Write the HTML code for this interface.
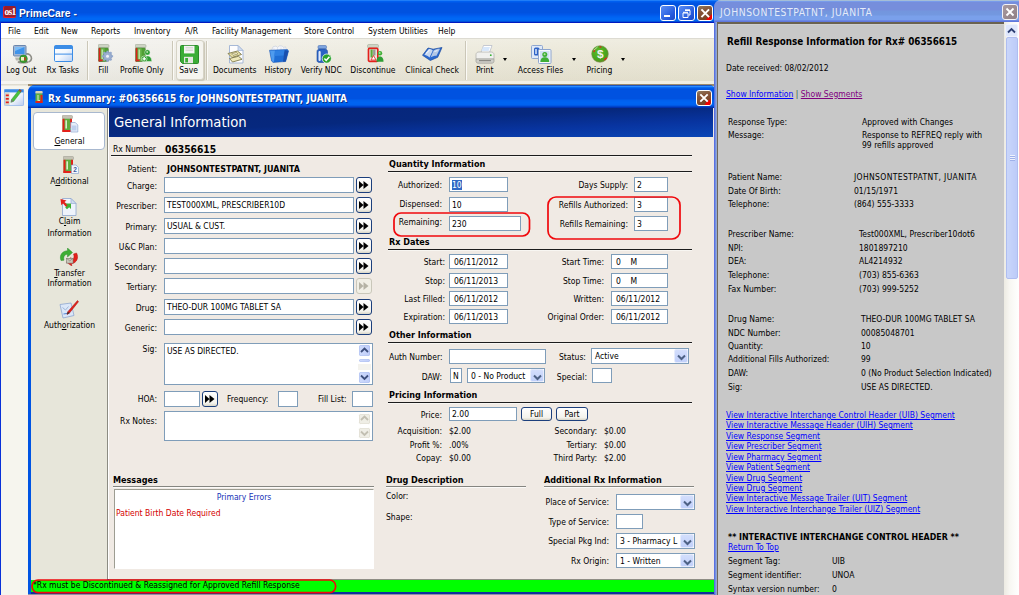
<!DOCTYPE html><html><head><meta charset="utf-8"><title>PrimeCare</title><style>
*{box-sizing:border-box;margin:0;padding:0}
html,body{width:1019px;height:595px;overflow:hidden;background:#f0eae4}
body{position:relative;font-family:"DejaVu Sans Condensed","Liberation Sans",sans-serif;font-size:8.5px;color:#000;line-height:11px}
.a{position:absolute;white-space:nowrap}
.t{position:absolute;white-space:nowrap;font-size:8.5px;line-height:11px;height:11px}
.r{text-align:right}
.b{font-weight:bold;font-size:9px}
.in{position:absolute;background:#fff;border:1px solid #7f9db9;font-size:8.5px;line-height:11px;padding:2px 0 0 2px;white-space:nowrap;overflow:hidden}
.hl{position:absolute;height:2px;border-top:1px solid #1c1c1c;border-bottom:1px solid #f8f6f2}
.gb{position:absolute;width:16px;height:16px;border:1px solid #1c3f7c;border-radius:3px;background:linear-gradient(#fff,#f3f2ec 80%,#d9d6c8)}
.gb svg{position:absolute;left:2px;top:3px}
.cb{position:absolute;background:#fff;border:1px solid #7f9db9;font-size:8.5px;line-height:11px;padding:2px 0 0 3px;white-space:nowrap;overflow:hidden}
.cb i{position:absolute;right:0;top:0;bottom:0;width:14px;background:linear-gradient(#d3defc,#c1d0fa);border:1px solid #e6ecfd;border-radius:2px}
.cb i svg{position:absolute;left:1.5px;top:3.5px}
.lk{color:#0000ff;text-decoration:underline}
.tb{position:absolute;top:38px;height:44px;text-align:center;font-size:11px}
.tb span{position:absolute;left:-20px;right:-20px;top:26px;text-align:center;white-space:nowrap}
.ico{position:absolute}
</style></head><body>
<div class="a" style="left:0px;top:0px;width:722px;height:23px;background:linear-gradient(#1f7df8 0.5px,#005ff0 1.5px,#0058e8 2.5px,#0052e0 3.5px,#0052e0 12.5px,#0057e9 14.5px,#0061f1 16.5px,#0068f5 18.5px,#0068f5 19.5px,#0064ee 20.5px,#0050d8 21.5px,#0018c0 22.5px)"></div>
<div class="a" style="left:3px;top:6px;width:13px;height:12px;background:#9a1d2c;border-left:1px solid #e8202a;border-bottom:1px solid #e8202a;border-radius:2px;color:#fff;font-size:9.5px;line-height:13px;font-weight:bold;text-align:center;letter-spacing:-0.8px;overflow:hidden;font-family:'Liberation Serif',serif">os1</div>
<div class="a" style="left:19px;top:6.5px;font-family:'Liberation Sans',sans-serif;font-size:10.300px;line-height:14px;font-weight:bold;color:#fff;text-shadow:1px 1px 0 #0a2f8a">PrimeCare -</div>
<div class="a" style="left:659.5px;top:4.5px;width:16.5px;height:16.5px;border:1px solid #fff;border-radius:3px;background:linear-gradient(135deg,#5c8cf2 0%,#3f75ea 35%,#2559dc 70%,#1c48c4 100%);overflow:hidden">
<div style="position:absolute;left:3.500px;top:9px;width:5.500px;height:2.500px;background:#fff"></div>
</div>
<div class="a" style="left:678px;top:4.5px;width:16.5px;height:16.5px;border:1px solid #fff;border-radius:3px;background:linear-gradient(135deg,#5c8cf2 0%,#3f75ea 35%,#2559dc 70%,#1c48c4 100%);overflow:hidden">
<svg width="15" height="15" viewBox="0 0 15 15" style="position:absolute;left:0;top:0"><path d="M6 4.500h5v4.500h-1.500M6 3.800h5" stroke="#fff" fill="none" stroke-width="1"/><path d="M4 7h5v4.500h-5zM4 6.300h5" stroke="#fff" fill="none" stroke-width="1"/></svg>
</div>
<div class="a" style="left:696.5px;top:4.5px;width:16.5px;height:16.5px;border:1px solid #fff;border-radius:3px;background:linear-gradient(160deg,#8f7c60 0%,#86553a 35%,#7b4527 75%,#8a3a20 100%);overflow:hidden">
<svg width="14.5" height="14.5" viewBox="0 0 14 14" style="position:absolute;left:0;top:0"><path d="M9.500 11l4-3v6h-6z" fill="#f20000"/><path d="M3.300 3.300L10.700 10.700M10.700 3.300L3.300 10.700" stroke="#fff" stroke-width="1.900" stroke-linecap="butt"/></svg>
</div>
<div class="a" style="left:0px;top:23px;width:716px;height:15px;background:#fff"></div>
<div class="t " style="left:8px;top:26px;">File</div>
<div class="t " style="left:34px;top:26px;">Edit</div>
<div class="t " style="left:61px;top:26px;">New</div>
<div class="t " style="left:91px;top:26px;">Reports</div>
<div class="t " style="left:134px;top:26px;">Inventory</div>
<div class="t " style="left:185px;top:26px;">A/R</div>
<div class="t " style="left:212px;top:26px;">Facility Management</div>
<div class="t " style="left:304px;top:26px;">Store Control</div>
<div class="t " style="left:368px;top:26px;">System Utilities</div>
<div class="t " style="left:438px;top:26px;">Help</div>
<div class="a" style="left:0px;top:38px;width:716px;height:43px;background:linear-gradient(rgba(255,255,255,.25),rgba(255,255,255,0) 40%,rgba(140,130,90,.09)),linear-gradient(90deg,#f3f3f0 0%,#f0efea 20%,#eeece2 40%,#ebe8d9 75%,#eae7d7 100%)"></div>
<div class="a" style="left:0px;top:38px;width:716px;height:1px;background:#dddbd2"></div>
<div class="a" style="left:0px;top:81px;width:716px;height:3px;background:linear-gradient(90deg,#f6f5f1,#efede1)"></div>
<div class="a" style="left:0px;top:84px;width:28px;height:2px;background:linear-gradient(#d8d5c8,#f0eee6)"></div>
<div class="a" style="left:28px;top:84px;width:688px;height:2px;background:#9c8a6a"></div>
<div class="a" style="left:176px;top:40px;width:28px;height:40px;border:1px solid #d6d3c6;border-radius:3px;background:#f5f4ef;box-shadow:1px 1px 1px #c9c5b4"></div>
<div class="a" style="left:13px;top:45px;line-height:0"><svg width="20" height="19" viewBox="0 0 20 19"><path d="M13 9a4.5 4.5 0 0 1 5.5 4.5a4 4 0 0 1-3 3.5" fill="none" stroke="#8d8d86" stroke-width="1.6"/><rect x=".5" y=".5" width="12.5" height="10.5" rx="1" fill="#9fb6d6" stroke="#6a86ad"/><rect x="2" y="2" width="9.5" height="7" fill="#3f93ea"/><path d="M2 2h9.5L2 6z" fill="#7cbcf6"/><path d="M2 12.5h8l1 3H3z" fill="#b7b7b0"/><ellipse cx="10" cy="17" rx="5.5" ry="1.6" fill="#8d8d86"/><circle cx="10.500" cy="13.800" r="3.900" fill="#35a02c" stroke="#2a7d24" stroke-width=".5"/><rect x="8" y="12" width="3" height="3.600" fill="#f3edc4"/><rect x="11.400" y="12.300" width="1.300" height="3.200" fill="#e3201b"/></svg></div>
<div class="t" style="left:-28.8px;width:100px;text-align:center;top:64.5px">Log Out</div>
<div class="a" style="left:54px;top:45px;line-height:0"><svg width="19" height="17" viewBox="0 0 19 17"><defs><linearGradient id="tg" x1="0" y1="0" x2="1" y2="1"><stop offset="0" stop-color="#fff"/><stop offset=".5" stop-color="#f4f8fe"/><stop offset="1" stop-color="#b9d0f3"/></linearGradient></defs><rect x=".5" y=".5" width="18" height="16" rx="1.2" fill="url(#tg)" stroke="#3c8de6"/><rect x=".5" y=".5" width="18" height="3.5" rx="1" fill="#3c8de6"/><rect x="1" y="8.6" width="17" height="1" fill="#3c8de6"/></svg></div>
<div class="t" style="left:12.799999999999997px;width:100px;text-align:center;top:64.5px">Rx Tasks</div>
<div class="a" style="left:98px;top:44px;line-height:0"><svg width="16" height="19" viewBox="0 0 16 19"><g transform="translate(0,0.5)"><rect x="0" y="0" width="11" height="3.4" rx="1.2" fill="#cdd4c4" stroke="#98a08e" stroke-width=".5"/><rect x=".6" y="3.4" width="9.8" height="13.6" rx="1" fill="#4f9f34"/><rect x="2.6" y="3.4" width="4" height="13.6" fill="#6bb64c"/><rect x=".6" y="3.4" width="1.8" height="13.6" fill="#e3201b"/><rect x=".6" y="15" width="4" height="2" fill="#e3201b"/><rect x="3.5" y="5" width="1.5" height="9.5" fill="#b9e0a2"/><rect x=".6" y="3.4" width="9.8" height="13.6" rx="1" fill="none" stroke="#4d7a38" stroke-width=".5"/></g><g transform="translate(9.5,12.3)"><circle r="4.2" fill="#93a8cc" stroke="#6f86b0" stroke-width=".6"/><circle r="1.6" fill="#e9edf5"/><g stroke="#93a8cc" stroke-width="2"><path d="M0-5.6V5.6M-5.6 0H5.6M-4-4L4 4M-4 4L4-4"/></g><circle r="3.2" fill="#9db0d2"/><circle r="1.5" fill="#eef1f7"/></g></svg></div>
<div class="t" style="left:53.400000000000006px;width:100px;text-align:center;top:64.5px">Fill</div>
<div class="a" style="left:135px;top:44px;line-height:0"><svg width="18" height="19" viewBox="0 0 18 19"><g transform="translate(0,0.5)"><rect x="0" y="0" width="11" height="3.4" rx="1.2" fill="#cdd4c4" stroke="#98a08e" stroke-width=".5"/><rect x=".6" y="3.4" width="9.8" height="13.6" rx="1" fill="#4f9f34"/><rect x="2.6" y="3.4" width="4" height="13.6" fill="#6bb64c"/><rect x=".6" y="3.4" width="1.8" height="13.6" fill="#e3201b"/><rect x=".6" y="15" width="4" height="2" fill="#e3201b"/><rect x="3.5" y="5" width="1.5" height="9.5" fill="#b9e0a2"/><rect x=".6" y="3.4" width="9.8" height="13.6" rx="1" fill="none" stroke="#4d7a38" stroke-width=".5"/></g><g transform="translate(8,6)"><circle cx="4.4" cy="2.4" r="2.7" fill="#2f9e35" stroke="#e9f3e4" stroke-width=".5"/><path d="M0 11.5c0-4 2-5.600 4.4-5.600s4.400 1.600 4.400 5.600z" fill="#2f9e35" stroke="#e9f3e4" stroke-width=".5"/><circle cx="4.2" cy="2" r="1" fill="#b5e3a6"/><circle cx="1.2" cy="8.8" r="2.9" fill="#2f9e2a" stroke="#fff" stroke-width=".5"/><path d="M-.6 8.8h3.6M1.2 7v3.6" stroke="#fff" stroke-width="1.3"/></g></svg></div>
<div class="t" style="left:91.9px;width:100px;text-align:center;top:64.5px">Profile Only</div>
<div class="a" style="left:179.5px;top:44.5px;line-height:0"><svg width="19" height="19" viewBox="0 0 19 19"><path d="M1.5.5h16a1 1 0 0 1 1 1v16a1 1 0 0 1-1 1h-15l-2-2v-15a1 1 0 0 1 1-1z" fill="#3bad36" stroke="#2b8c2a"/><rect x="4" y=".8" width="10.5" height="7.6" fill="#f4f4f2"/><rect x="5.5" y="2.2" width="7.5" height="1.2" fill="#d4d4d0"/><rect x="5.5" y="4.6" width="7.5" height="1.2" fill="#d4d4d0"/><rect x="4" y="11.8" width="9" height="6.4" fill="#e6e6e2"/><rect x="5.2" y="13" width="2.8" height="4.4" fill="#3bad36"/></svg></div>
<div class="t" style="left:138.6px;width:100px;text-align:center;top:64.5px">Save</div>
<div class="a" style="left:227px;top:44.5px;line-height:0"><svg width="18" height="19" viewBox="0 0 18 19"><path d="M2.500.500h8.500l5 5v12.500h-13.500z" fill="#fdfdfe" stroke="#9db1d4" stroke-width=".9"/><path d="M11 .500v5h5z" fill="#cfdcf0" stroke="#9db1d4" stroke-width=".7"/><path d="M1 8.500l9.500-2.500l4 3.500l-9.500 3z" fill="#e9e2a8" stroke="#7f7a4c" stroke-width=".9"/><path d="M4.500 8.800l5-1.300l1.500 1.400l-5 1.500z" fill="#f5f0cc" stroke="#7f7a4c" stroke-width=".6"/><path d="M2.500 13.500l9-2.200l3.500 3l-9.500 2.700z" fill="#efe9ba" stroke="#7f7a4c" stroke-width=".9"/></svg></div>
<div class="t" style="left:184.7px;width:100px;text-align:center;top:64.5px">Documents</div>
<div class="a" style="left:269px;top:45px;line-height:0"><svg width="20" height="18" viewBox="0 0 20 18"><path d="M2.500 5.500l1.500-3.700l3-.8l1.700 1.500l1.600-1.700l3 .2l1.200 1.500l2-.7l1.200 3.700z" fill="#f4f6fa" stroke="#c2cad8" stroke-width=".6"/><path d="M5 3.200v2M8.500 2.800v2.500M12 2.500v3M15 3v2.500" stroke="#d5dbe6" stroke-width=".7"/><path d="M.500 5.200l18-.7l1 1.500l-2.800 10.500l-12.500 1l-1.700-1.500z" fill="#1f6dd4" stroke="#1a56b4" stroke-width=".5"/><path d="M1 5.700l5-.2l-1 11.500l-2-.8z" fill="#4f9bee"/><path d="M15.500 5l4 1l-2.800 10.500l-2.700.3z" fill="#1950ae"/><path d="M6 5.500l9.500-.4l-1 5.500l-9 .5z" fill="#2f80e2"/></svg></div>
<div class="t" style="left:228.10000000000002px;width:100px;text-align:center;top:64.5px">History</div>
<div class="a" style="left:316px;top:44.5px;line-height:0"><svg width="16" height="19" viewBox="0 0 16 19"><rect x="2" y=".5" width="8.500" height="3.500" rx="1.200" fill="#7ea4de" stroke="#4c72b4" stroke-width=".6"/><path d="M1 6.500c0-1.500 1.200-2.500 2.800-2.500h4.900c1.600 0 2.800 1 2.800 2.500v9c0 1.200-1 2-2.200 2h-6.100c-1.200 0-2.200-.8-2.200-2z" fill="#2b63c4" stroke="#1f4a9a" stroke-width=".6"/><rect x="2.500" y="6" width="2.200" height="10" rx="1" fill="#dfe9fa"/><circle cx="10.800" cy="13.600" r="4.600" fill="#2aa22c" stroke="#fff" stroke-width=".7"/><path d="M8.400 13.600l1.800 1.900l3.200-3.700" fill="none" stroke="#fff" stroke-width="1.500"/></svg></div>
<div class="t" style="left:271.3px;width:100px;text-align:center;top:64.5px">Verify NDC</div>
<div class="a" style="left:367px;top:44px;line-height:0"><svg width="18" height="19" viewBox="0 0 18 19"><g transform="translate(.5,.5)"><rect x="0" y="0" width="11" height="3.4" rx="1.2" fill="#cdd4c4" stroke="#98a08e" stroke-width=".5"/><rect x="1" y="3.800" width="9.300" height="13" rx="1" fill="#e9ece6" stroke="#e3201b" stroke-width="1.700"/><rect x="3" y="5" width="2.200" height="8" fill="#5aaa3c"/><rect x="5.600" y="5" width="2.400" height="6" fill="#9a9a92"/><path d="M3.500 15.500l2.500-4.500l2.500 4.500z" fill="#fff" stroke="#e3201b" stroke-width=".8"/></g><g transform="translate(9.500,7)"><circle cx="3.500" cy="2.300" r="2.200" fill="#3fae35"/><path d="M0 10.800c0-3.800 1.500-5.200 3.500-5.200s3.500 1.400 3.500 5.200z" fill="#2e9e34"/><circle cx="3.200" cy="1.900" r=".9" fill="#b5e3a6"/></g></svg></div>
<div class="t" style="left:322.9px;width:100px;text-align:center;top:64.5px">Discontinue</div>
<div class="a" style="left:422px;top:46.5px;line-height:0"><svg width="21" height="14" viewBox="0 0 21 14"><path d="M.5 8.300l5.500-7.300l5.200 1.200l8.800-1.700l-4.300 9.800l-7.400 3.200z" fill="#2a68cf" stroke="#1b4b9c" stroke-width=".7"/><path d="M2.300 7.800l4.500-5.800c1.600 0 2.900.4 4 1.500l-3.300 7c-1.400-1.300-3-2.200-5.200-2.700z" fill="#c9d8ef"/><path d="M11.600 3.400c1.600-1 3.800-1.600 6.400-1.600l-3.500 7c-2.400 0-4.400.6-6 1.800z" fill="#b4c8e6"/><path d="M4 6.500l3.500-3.500M12.500 4.500l3-1" stroke="#e8f0fb" stroke-width="1.200"/></svg></div>
<div class="t" style="left:382.1px;width:100px;text-align:center;top:64.5px">Clinical Check</div>
<div class="a" style="left:475px;top:44.5px;line-height:0"><svg width="20" height="19" viewBox="0 0 20 19"><path d="M6 7.500l2.500-7h8.500l-2.500 7z" fill="#fff" stroke="#b0b6c4" stroke-width=".7"/><path d="M8 2h7l-1.400 4h-7z" fill="#d7e7fb"/><path d="M1 9.500c0-1.400 1.200-2.500 2.800-2.500h12.400c1.600 0 2.800 1.100 2.800 2.500v4.500h-18z" fill="#f0f0ee" stroke="#aeaea8" stroke-width=".7"/><path d="M1 14h18v2.200c0 1.200-1 2-2.200 2h-13.600c-1.200 0-2.200-.8-2.200-2z" fill="#cfcfca" stroke="#9c9c96" stroke-width=".7"/><rect x="4" y="15" width="12" height="1.200" fill="#8a8a86"/><circle cx="15.800" cy="10.200" r=".9" fill="#35b02f"/></svg></div>
<div class="t" style="left:434.7px;width:100px;text-align:center;top:64.5px">Print</div>
<div class="a" style="left:530.5px;top:44.5px;line-height:0"><svg width="21" height="19" viewBox="0 0 21 19"><rect x=".5" y=".5" width="11" height="13" rx="1" fill="#dfe9f8" stroke="#8ea6cf"/><rect x="3" y="2.500" width="5.500" height="8" rx="1.500" fill="#2e62c6"/><rect x="4.200" y="4" width="1.600" height="5" fill="#cfe0f8"/><rect x="7.500" y="4.500" width="12.500" height="14" rx="1" fill="#f6f8fc" stroke="#8ea6cf"/><rect x="9" y="6" width="9.500" height="11" fill="#d3e1f5"/><circle cx="13.800" cy="9.600" r="2.500" fill="#3fae35"/><path d="M9.400 17c0-3.400 2-4.800 4.400-4.800s4.400 1.400 4.400 4.800z" fill="#3fae35"/><circle cx="13.600" cy="9.200" r="1" fill="#b5e3a6"/></svg></div>
<div class="t" style="left:490.5px;width:100px;text-align:center;top:64.5px">Access Files</div>
<div class="a" style="left:591.3px;top:45.3px;line-height:0"><svg width="18" height="18" viewBox="0 0 19 19"><defs><radialGradient id="pg" cx=".4" cy=".35" r=".75"><stop offset="0" stop-color="#5cbc2a"/><stop offset=".65" stop-color="#48a41c"/><stop offset="1" stop-color="#6f8420"/></radialGradient></defs><circle cx="9.500" cy="9.500" r="8.800" fill="url(#pg)" stroke="#7d8f58" stroke-width=".6"/><path d="M3 7.500l1-3M9 2l2 .3M14 16l2.500-2.500" stroke="#e3201b" stroke-width="1.300"/><path d="M3 5.500l4-3.500" stroke="#d8f0c8" stroke-width=".8"/><text x="9.700" y="13.800" text-anchor="middle" font-family="Liberation Sans,sans-serif" font-weight="bold" font-size="12.500" fill="#f1f1ee">$</text></svg></div>
<div class="t" style="left:549.4px;width:100px;text-align:center;top:64.5px">Pricing</div>
<div class="a" style="left:87px;top:41px;width:2px;height:39px;border-left:1px solid #cbc7b8;border-right:1px solid #fbfaf6"></div>
<div class="a" style="left:171.5px;top:41px;width:2px;height:39px;border-left:1px solid #cbc7b8;border-right:1px solid #fbfaf6"></div>
<div class="a" style="left:205.5px;top:41px;width:2px;height:39px;border-left:1px solid #cbc7b8;border-right:1px solid #fbfaf6"></div>
<div class="a" style="left:464.5px;top:41px;width:2px;height:39px;border-left:1px solid #cbc7b8;border-right:1px solid #fbfaf6"></div>
<div class="a" style="left:502.5px;top:58px;width:0;height:0;border-left:2.5px solid transparent;border-right:2.5px solid transparent;border-top:3px solid #000"></div>
<div class="a" style="left:572.0px;top:58px;width:0;height:0;border-left:2.5px solid transparent;border-right:2.5px solid transparent;border-top:3px solid #000"></div>
<div class="a" style="left:621.0px;top:58px;width:0;height:0;border-left:2.5px solid transparent;border-right:2.5px solid transparent;border-top:3px solid #000"></div>
<div class="a" style="left:0px;top:86px;width:28px;height:509px;background:#f6f5ee"></div>
<div class="a" style="left:0px;top:22px;width:1px;height:573px;background:#0831d9"></div>
<div class="a" style="left:28px;top:85px;width:688px;height:510px;background:#0054e3;border-radius:7px 7px 0 0"></div>
<div class="a" style="left:28px;top:85px;width:688px;height:23px;border-radius:7px 7px 0 0;background:linear-gradient(#1c55c0 0.5px,#2a8cff 1.5px,#0a6af2 2.5px,#005ae8 3.5px,#0052e0 4.5px,#0052e0 13.5px,#0060ee 15.5px,#0064f2 17.5px,#0062f0 19.5px,#0058e4 20.5px,#0046cc 21.5px,#0032b0 22.5px)"></div>
<div class="a" style="left:48px;top:92px;font-size:10px;line-height:14px;font-weight:bold;color:#fff;text-shadow:1px 1px 0 #0a2f8a">Rx Summary: #06356615 for JOHNSONTESTPATNT, JUANITA</div>
<div class="a" style="left:695.5px;top:89.5px;width:16px;height:16px;border:1px solid #fff;border-radius:3px;background:linear-gradient(160deg,#8f7c60 0%,#86553a 35%,#7b4527 75%,#8a3a20 100%);overflow:hidden">
<svg width="14" height="14" viewBox="0 0 14 14" style="position:absolute;left:0;top:0"><path d="M9.500 11l4-3v6h-6z" fill="#f20000"/><path d="M3.300 3.300L10.700 10.700M10.700 3.300L3.300 10.700" stroke="#fff" stroke-width="1.900" stroke-linecap="butt"/></svg>
</div>
<div class="a" style="left:35px;top:91px;line-height:0"><svg width="8" height="12" viewBox="0 0 8 12"><rect x=".3" y="0" width="7.400" height="2.800" rx="1" fill="#d8d2b4"/><rect x=".5" y="2.600" width="7" height="9.400" rx=".8" fill="#5fae3e"/><rect x=".5" y="10" width="7" height="2" fill="#e3201b"/><rect x="5.500" y="4" width="2" height="8" fill="#e3201b"/><path d="M3 4v5.500h2" fill="none" stroke="#cfe8c0" stroke-width="1.100"/></svg></div>
<div class="a" style="left:4px;top:88.500px;line-height:0"><svg width="20" height="17" viewBox="0 0 20 17"><defs><linearGradient id="sg" x1="0" y1="0" x2="1" y2="1"><stop offset="0" stop-color="#fff"/><stop offset=".6" stop-color="#eef2fb"/><stop offset="1" stop-color="#b9cbef"/></linearGradient></defs><rect x=".4" y=".4" width="19.200" height="16.200" rx="1" fill="url(#sg)" stroke="#8fb2ea" stroke-width=".8"/><rect x=".4" y=".4" width="19.200" height="3" fill="#3c8de6"/><rect x="1" y="3.600" width="4.500" height="12.500" fill="#d9d6c4"/><rect x="1.800" y="5.500" width="3" height="1.700" fill="#e3201b"/><rect x="1.800" y="9" width="3" height="1.700" fill="#e3201b"/><rect x="1.800" y="12.500" width="3" height="1.700" fill="#e3201b"/><path d="M7.500 10.500l7-9l2.200 1.800l-7 9l-2.800 1z" fill="#49c23c" stroke="#2b8c2a" stroke-width=".5"/><path d="M14.500 1.500l1.200-1.500l2.200 1.800l-1.200 1.500z" fill="#a0522d"/><path d="M7.500 10.500l2.200 1.800l-2.800 1z" fill="#777"/></svg></div>
<div class="a" style="left:31px;top:108px;width:76px;height:485px;background:#e7e6da"></div>
<div class="a" style="left:107px;top:108px;width:1px;height:471px;background:#8c8c82"></div>
<div class="a" style="left:108px;top:108px;width:1px;height:471px;background:#fff"></div>
<div class="a" style="left:109px;top:108px;width:605px;height:485px;background:#f0eae4"></div>
<div class="a" style="left:109px;top:108px;width:604px;height:28.5px;background:linear-gradient(to bottom right,#06267a 0%,#06287e 45%,#0834a0 72%,#0a46b6 100%)"></div>
<div class="a" style="left:114px;top:113px;font-size:14.7px;line-height:18px;color:#fff">General Information</div>
<div class="a" style="left:33px;top:112px;width:72px;height:38px;background:#fff;border:1px solid #a8b8cf;border-radius:4px"></div>
<div class="a" style="left:62px;top:115px;line-height:0"><svg width="17" height="18" viewBox="0 0 17 18"><g transform="translate(0,0.5)"><rect x="0" y="0" width="10.5" height="3.3000000000000003" rx="1" fill="#c4c2b4" stroke="#96948a" stroke-width=".5"/><rect x=".5" y="3.3000000000000003" width="9.5" height="13.2" rx="1" fill="#5fae3e"/><rect x=".5" y="3.3000000000000003" width="2" height="13.2" fill="#e3201b"/><rect x=".5" y="14.5" width="9.5" height="2" fill="#e3201b"/><rect x="3.4" y="4.800000000000001" width="1.6" height="8.2" fill="#d9efcc"/><rect x="8.1" y="3.3000000000000003" width="1.9" height="9.2" fill="#e3201b"/></g><path d="M8.800 7.500h4.500l2.500 2.500v7h-7z" fill="#e8effa" stroke="#8ea6cf" stroke-width=".7"/><rect x="10" y="10.500" width="4.500" height="5" fill="#bdd0ee"/></svg></div>
<div class="a" style="left:63px;top:156px;line-height:0"><svg width="17" height="18" viewBox="0 0 17 18"><g transform="translate(0,0.5)"><rect x="0" y="0" width="10.5" height="3.3000000000000003" rx="1" fill="#c4c2b4" stroke="#96948a" stroke-width=".5"/><rect x=".5" y="3.3000000000000003" width="9.5" height="13.2" rx="1" fill="#5fae3e"/><rect x=".5" y="3.3000000000000003" width="2" height="13.2" fill="#e3201b"/><rect x=".5" y="14.5" width="9.5" height="2" fill="#e3201b"/><rect x="3.4" y="4.800000000000001" width="1.6" height="8.2" fill="#d9efcc"/><rect x="8.1" y="3.3000000000000003" width="1.9" height="9.2" fill="#e3201b"/></g><path d="M8.500 9h4.500l2.500 2.500v6h-7z" fill="#f4f7fc" stroke="#8ea6cf" stroke-width=".7"/><text x="12" y="16.200" font-size="6.500" font-weight="bold" font-family="Liberation Sans,sans-serif" text-anchor="middle" fill="#3a5a9a">2</text></svg></div>
<div class="a" style="left:60px;top:196.5px;line-height:0"><svg width="17" height="19" viewBox="0 0 17 19"><path d="M2.500 1.500h8.500l5 5v12h-13.500z" fill="#eef3fb" stroke="#8ea6cf" stroke-width=".8"/><path d="M11 1.500v5h5z" fill="#cfdcf0" stroke="#8ea6cf" stroke-width=".6"/><path d="M.5 2l6 1.500l-2 1.500l4 3.500l-2 2l-3.500-4l-1.700 1.700z" fill="#e3201b"/><path d="M5.500 6.500l5.500 0l0 5.500l-1.800-1.800l-2.200 2l-1.800-1.800l2.200-2z" fill="#3fae35"/></svg></div>
<div class="a" style="left:59px;top:248px;line-height:0"><svg width="20" height="18" viewBox="0 0 20 18"><path d="M2 12.500c-2-5 1-9.500 6.500-9.800l0-2.700l5 4.500l-5 4.500l0-2.800c-3 .2-4.500 2.500-3.500 6z" fill="#3fae35" stroke="#2b8c2a" stroke-width=".5"/><path d="M17.500 5c2.500 4.500.5 9.800-5 10.800l.3 2.200l-5.300-3.800l4.300-4.700l.3 2.700c2.700-.8 3.600-3.200 2.400-6.200z" fill="#e3201b" stroke="#b01712" stroke-width=".5"/><rect x="7.500" y="10.300" width="6.500" height="4.800" fill="#c9c7ba" stroke="#7d7b70" stroke-width=".6"/><path d="M7.500 10.300l3.250 2.600l3.250-2.600" fill="none" stroke="#7d7b70" stroke-width=".6"/></svg></div>
<div class="a" style="left:59px;top:299.5px;line-height:0"><svg width="20" height="19" viewBox="0 0 20 19"><path d="M1 4.500l11-1.500l3 12.500l-11 2.500z" fill="#dbe7f8" stroke="#8ea6cf" stroke-width=".8"/><path d="M3.500 7.500l3 2.500l3-3.500" fill="none" stroke="#9fb6d8" stroke-width="1"/><path d="M4.500 14l6-1" stroke="#5a8bd6" stroke-width="1.200"/><path d="M18.500.5l1 1.200l-9 11.300l-2.500 1.500l.8-2.800z" fill="#e3201b" stroke="#a01510" stroke-width=".5"/><path d="M8 14.500l.800-2.800l1.700 1.300z" fill="#333"/></svg></div>
<div class="t" style="left:31px;width:77px;text-align:center;top:136px"><u>G</u>eneral</div>
<div class="t" style="left:31px;width:77px;text-align:center;top:176px">A<u>d</u>ditional</div>
<div class="t" style="left:31px;width:77px;text-align:center;top:216px">C<u>l</u>aim</div>
<div class="t" style="left:31px;width:77px;text-align:center;top:228px">Information</div>
<div class="t" style="left:31px;width:77px;text-align:center;top:268px"><u>T</u>ransfer</div>
<div class="t" style="left:31px;width:77px;text-align:center;top:278px">Information</div>
<div class="t" style="left:31px;width:77px;text-align:center;top:320px">Auth<u>o</u>rization</div>
<div class="t " style="left:113px;top:144px;">Rx Number</div>
<div class="t b" style="left:165px;top:144px;font-size:10.2px">06356615</div>
<div class="hl" style="left:111px;top:155px;width:580.5px"></div>
<div class="t b" style="left:167px;top:164px;font-size:8.9px">JOHNSONTESTPATNT, JUANITA</div>
<div class="t r " style="left:-143px;width:300px;top:164px;">Patient:</div>
<div class="t r " style="left:-143px;width:300px;top:181px;">Charge:</div>
<div class="in" style="left:164px;top:177px;width:190px;height:16px;padding-top:1.5px"></div>
<div class="gb" style="left:356px;top:177px"><svg width="10" height="8" viewBox="0 0 10 8"><path d="M0 0L4.5 4L0 8Z M4.5 0L9.5 4L4.5 8Z" fill="#000"/></svg></div>
<div class="t r " style="left:-143px;width:300px;top:201px;">Prescriber:</div>
<div class="in" style="left:164px;top:197px;width:190px;height:16px;padding-top:1.5px">TEST000XML, PRESCRIBER10D</div>
<div class="gb" style="left:356px;top:197px"><svg width="10" height="8" viewBox="0 0 10 8"><path d="M0 0L4.5 4L0 8Z M4.5 0L9.5 4L4.5 8Z" fill="#000"/></svg></div>
<div class="t r " style="left:-143px;width:300px;top:222px;">Primary:</div>
<div class="in" style="left:164px;top:218px;width:190px;height:16px;padding-top:1.5px">USUAL &amp; CUST.</div>
<div class="gb" style="left:356px;top:218px"><svg width="10" height="8" viewBox="0 0 10 8"><path d="M0 0L4.5 4L0 8Z M4.5 0L9.5 4L4.5 8Z" fill="#000"/></svg></div>
<div class="t r " style="left:-143px;width:300px;top:242px;">U&amp;C Plan:</div>
<div class="in" style="left:164px;top:238px;width:190px;height:16px;padding-top:1.5px"></div>
<div class="gb" style="left:356px;top:238px"><svg width="10" height="8" viewBox="0 0 10 8"><path d="M0 0L4.5 4L0 8Z M4.5 0L9.5 4L4.5 8Z" fill="#000"/></svg></div>
<div class="t r " style="left:-143px;width:300px;top:262px;">Secondary:</div>
<div class="in" style="left:164px;top:258px;width:190px;height:16px;padding-top:1.5px"></div>
<div class="gb" style="left:356px;top:258px"><svg width="10" height="8" viewBox="0 0 10 8"><path d="M0 0L4.5 4L0 8Z M4.5 0L9.5 4L4.5 8Z" fill="#000"/></svg></div>
<div class="t r " style="left:-143px;width:300px;top:282px;">Tertiary:</div>
<div class="in" style="left:164px;top:278px;width:190px;height:16px;padding-top:1.5px"></div>
<div class="gb" style="left:356px;top:278px;border-color:#c9c7ba;background:#f1efe6"><svg width="10" height="8" viewBox="0 0 10 8"><path d="M0 0L4.5 4L0 8Z M4.5 0L9.5 4L4.5 8Z" fill="#b5b2a5"/></svg></div>
<div class="t r " style="left:-143px;width:300px;top:303px;">Drug:</div>
<div class="in" style="left:164px;top:299px;width:190px;height:16px;padding-top:1.5px">THEO-DUR 100MG TABLET SA</div>
<div class="gb" style="left:356px;top:299px"><svg width="10" height="8" viewBox="0 0 10 8"><path d="M0 0L4.5 4L0 8Z M4.5 0L9.5 4L4.5 8Z" fill="#000"/></svg></div>
<div class="t r " style="left:-143px;width:300px;top:323px;">Generic:</div>
<div class="in" style="left:164px;top:319px;width:190px;height:16px;padding-top:1.5px"></div>
<div class="gb" style="left:356px;top:319px"><svg width="10" height="8" viewBox="0 0 10 8"><path d="M0 0L4.5 4L0 8Z M4.5 0L9.5 4L4.5 8Z" fill="#000"/></svg></div>
<div class="t r " style="left:-143px;width:300px;top:344px;">Sig:</div>
<div class="in" style="left:164px;top:342.5px;width:208.5px;height:42.0px;padding-top:2px">USE AS DIRECTED.</div>
<div class="a" style="left:358px;top:344px;width:13px;height:39.5px;background:linear-gradient(#fff 50%,#f4f3ee 50%,#f4f3ee 65%,#fff 65%)"><div style="position:absolute;left:0;top:0;width:13px;height:12.5px;background:linear-gradient(90deg,#cfdbfc,#bfcdf9);border:1px solid #fff;border-radius:2.500px;box-shadow:inset 0 0 0 .6px #aebff0"><svg width="9" height="7" viewBox="0 0 9 7" style="position:absolute;left:1.0px;top:1.75px"><path d="M1 5L4.500 1.500L8 5" fill="none" stroke="#3d4f7d" stroke-width="1.800"/></svg></div><div style="position:absolute;left:0;bottom:0;width:13px;height:12.5px;background:linear-gradient(90deg,#cfdbfc,#bfcdf9);border:1px solid #fff;border-radius:2.500px;box-shadow:inset 0 0 0 .6px #aebff0"><svg width="9" height="7" viewBox="0 0 9 7" style="position:absolute;left:1.0px;top:2.25px"><path d="M1 1.500L4.500 5L8 1.500" fill="none" stroke="#3d4f7d" stroke-width="1.800"/></svg></div><div style="position:absolute;left:0;top:13.5px;width:13px;height:5.5px;background:linear-gradient(90deg,#cfdbfc,#bfcdf9);border:1px solid #fff;border-radius:2.500px;box-shadow:inset 0 0 0 .6px #aebff0"></div></div>
<div class="t r " style="left:-143px;width:300px;top:394px;">HOA:</div>
<div class="in" style="left:164px;top:390.5px;width:36px;height:16.0px;"></div>
<div class="gb" style="left:202px;top:390.5px"><svg width="10" height="8" viewBox="0 0 10 8"><path d="M0 0L4.5 4L0 8Z M4.5 0L9.5 4L4.5 8Z" fill="#000"/></svg></div>
<div class="t " style="left:227px;top:394px;">Frequency:</div>
<div class="in" style="left:277.5px;top:390.5px;width:20.5px;height:16.0px;"></div>
<div class="t " style="left:318px;top:394px;">Fill List:</div>
<div class="in" style="left:352px;top:390.5px;width:20.5px;height:16.0px;"></div>
<div class="t r " style="left:-143px;width:300px;top:416px;">Rx Notes:</div>
<div class="in" style="left:164px;top:411px;width:208.5px;height:29.5px;"></div>
<div class="a" style="left:358px;top:412.5px;width:13px;height:26.5px;background:#fff"><div style="position:absolute;left:0;top:0;width:13px;height:12.5px;background:#efeee6;border:1px solid #fff;border-radius:2.500px;box-shadow:inset 0 0 0 .6px #dddace"><svg width="9" height="7" viewBox="0 0 9 7" style="position:absolute;left:1.0px;top:1.75px"><path d="M1 5L4.500 1.500L8 5" fill="none" stroke="#c2bfb2" stroke-width="1.800"/></svg></div><div style="position:absolute;left:0;bottom:0;width:13px;height:12.5px;background:#efeee6;border:1px solid #fff;border-radius:2.500px;box-shadow:inset 0 0 0 .6px #dddace"><svg width="9" height="7" viewBox="0 0 9 7" style="position:absolute;left:1.0px;top:2.25px"><path d="M1 1.500L4.500 5L8 1.500" fill="none" stroke="#c2bfb2" stroke-width="1.800"/></svg></div></div>
<div class="t b" style="left:113px;top:475px;">Messages</div>
<div class="a" style="left:113px;top:485.5px;width:261px;height:1.6000000000000227px;background:#858580"></div>
<div class="a" style="left:113px;top:487.1px;width:261px;height:1.0px;background:#fbfaf8"></div>
<div class="a" style="left:114px;top:489px;width:260px;height:80px;background:#fff;border:1px solid #9d9d92;border-right-color:#fff;border-bottom-color:#fff"></div>
<div class="t" style="left:114px;width:260px;text-align:center;top:492px;color:#1533b8">Primary Errors</div>
<div class="t " style="left:116px;top:508px;color:#d40000">Patient Birth Date Required</div>
<div class="t b" style="left:389px;top:159px;">Quantity Information</div>
<div class="hl" style="left:388px;top:171px;width:303.5px"></div>
<div class="t r " style="left:142px;width:300px;top:180px;">Authorized:</div>
<div class="in" style="left:449px;top:177px;width:59px;height:15px;"><span style="background:#316ac5;color:#fff">10</span></div>
<div class="t r " style="left:142px;width:300px;top:199px;">Dispensed:</div>
<div class="in" style="left:449px;top:197px;width:59px;height:15px;">10</div>
<div class="t r " style="left:142px;width:300px;top:217px;">Remaining:</div>
<div class="in" style="left:449px;top:216px;width:72px;height:15px;">230</div>
<div class="t r " style="left:328px;width:300px;top:180px;">Days Supply:</div>
<div class="in" style="left:634px;top:177px;width:34px;height:15px;">2</div>
<div class="t r " style="left:328px;width:300px;top:200px;">Refills Authorized:</div>
<div class="in" style="left:634px;top:197px;width:34px;height:15px;">3</div>
<div class="t r " style="left:328px;width:300px;top:219px;">Refills Remaining:</div>
<div class="in" style="left:634px;top:216px;width:34px;height:15px;">3</div>
<svg class="a" style="left:391.5px;top:210.5px" width="139.5" height="27.0" viewBox="-2 -2 139.5 27.0"><rect x="0" y="0" width="135.5" height="23.0" rx="7" fill="none" stroke="#f0080c" stroke-width="1.7"/></svg>
<svg class="a" style="left:545.5px;top:194.5px" width="136.0" height="46.0" viewBox="-2 -2 136.0 46.0"><rect x="0" y="0" width="132.0" height="42.0" rx="8" fill="none" stroke="#f0080c" stroke-width="1.7"/></svg>
<div class="t b" style="left:389px;top:237px;">Rx Dates</div>
<div class="hl" style="left:388px;top:249px;width:303.5px"></div>
<div class="t r " style="left:145px;width:300px;top:257px;">Start:</div>
<div class="in" style="left:449px;top:254px;width:59px;height:15px;padding-left:4px">06/11/2012</div>
<div class="t r " style="left:304px;width:300px;top:257px;">Start Time:</div>
<div class="in" style="left:611px;top:254px;width:57px;height:15px;padding-left:4px">0 &nbsp;&nbsp; M</div>
<div class="t r " style="left:145px;width:300px;top:276px;">Stop:</div>
<div class="in" style="left:449px;top:273px;width:59px;height:15px;padding-left:4px">06/11/2013</div>
<div class="t r " style="left:304px;width:300px;top:276px;">Stop Time:</div>
<div class="in" style="left:611px;top:273px;width:57px;height:15px;padding-left:4px">0 &nbsp;&nbsp; M</div>
<div class="t r " style="left:145px;width:300px;top:294px;">Last Filled:</div>
<div class="in" style="left:449px;top:291px;width:59px;height:15px;padding-left:4px">06/11/2012</div>
<div class="t r " style="left:304px;width:300px;top:294px;">Written:</div>
<div class="in" style="left:611px;top:291px;width:57px;height:15px;padding-left:4px">06/11/2012</div>
<div class="t r " style="left:145px;width:300px;top:312px;">Expiration:</div>
<div class="in" style="left:449px;top:309px;width:59px;height:15px;padding-left:4px">06/11/2013</div>
<div class="t r " style="left:304px;width:300px;top:312px;">Original Order:</div>
<div class="in" style="left:611px;top:309px;width:57px;height:15px;padding-left:4px">06/11/2012</div>
<div class="t b" style="left:389px;top:330px;">Other Information</div>
<div class="hl" style="left:388px;top:342px;width:303.5px"></div>
<div class="t " style="left:389px;top:352px;">Auth Number:</div>
<div class="in" style="left:449px;top:349px;width:97px;height:15px;"></div>
<div class="t " style="left:559px;top:352px;">Status:</div>
<div class="cb" style="left:591px;top:348px;width:98px;height:16px">Active<i><svg width="9" height="7" viewBox="0 0 9 7"><path d="M1 1.5L4.5 5L8 1.5" fill="none" stroke="#4d6185" stroke-width="2"/></svg></i></div>
<div class="t r " style="left:142px;width:300px;top:372px;">DAW:</div>
<div class="in" style="left:450px;top:368px;width:12px;height:15px;">N</div>
<div class="cb" style="left:467px;top:368px;width:78px;height:15px">0 - No Product<i><svg width="9" height="7" viewBox="0 0 9 7"><path d="M1 1.5L4.5 5L8 1.5" fill="none" stroke="#4d6185" stroke-width="2"/></svg></i></div>
<div class="t r " style="left:287px;width:300px;top:372px;">Special:</div>
<div class="in" style="left:592px;top:368px;width:20px;height:15px;"></div>
<div class="t b" style="left:389px;top:390px;">Pricing Information</div>
<div class="hl" style="left:388px;top:402px;width:303.5px"></div>
<div class="t r " style="left:142px;width:300px;top:410px;">Price:</div>
<div class="in" style="left:449px;top:407px;width:68px;height:14px;padding-top:1px">2.00</div>
<div class="a" style="left:521px;top:407px;width:31px;height:14px;border:1px solid #1c3f7c;border-radius:3px;background:linear-gradient(#fff,#f3f2ec 80%,#d9d6c8);text-align:center;font-size:8.5px;line-height:12px">Full</div>
<div class="a" style="left:556px;top:407px;width:32px;height:14px;border:1px solid #1c3f7c;border-radius:3px;background:linear-gradient(#fff,#f3f2ec 80%,#d9d6c8);text-align:center;font-size:8.5px;line-height:12px">Part</div>
<div class="t r " style="left:142px;width:300px;top:426px;">Acquisition:</div>
<div class="t " style="left:449px;top:426px;">$2.00</div>
<div class="t r " style="left:297px;width:300px;top:426px;">Secondary:</div>
<div class="t " style="left:604px;top:426px;">$0.00</div>
<div class="t r " style="left:142px;width:300px;top:440px;">Profit %:</div>
<div class="t " style="left:449px;top:440px;">.00%</div>
<div class="t r " style="left:297px;width:300px;top:440px;">Tertiary:</div>
<div class="t " style="left:604px;top:440px;">$0.00</div>
<div class="t r " style="left:142px;width:300px;top:453px;">Copay:</div>
<div class="t " style="left:449px;top:453px;">$0.00</div>
<div class="t r " style="left:297px;width:300px;top:453px;">Third Party:</div>
<div class="t " style="left:604px;top:453px;">$2.00</div>
<div class="t b" style="left:386px;top:475px;">Drug Description</div>
<div class="a" style="left:386px;top:485.5px;width:140px;height:1.6000000000000227px;background:#858580"></div>
<div class="a" style="left:386px;top:487.1px;width:140px;height:1.0px;background:#fbfaf8"></div>
<div class="t " style="left:386px;top:491px;">Color:</div>
<div class="t " style="left:386px;top:512px;">Shape:</div>
<div class="t b" style="left:544px;top:475px;">Additional Rx Information</div>
<div class="a" style="left:544px;top:485.5px;width:150px;height:1.6000000000000227px;background:#858580"></div>
<div class="a" style="left:544px;top:487.1px;width:150px;height:1.0px;background:#fbfaf8"></div>
<div class="t r " style="left:309px;width:300px;top:497px;">Place of Service:</div>
<div class="cb" style="left:616px;top:494px;width:79px;height:16px"><i><svg width="9" height="7" viewBox="0 0 9 7"><path d="M1 1.5L4.5 5L8 1.5" fill="none" stroke="#4d6185" stroke-width="2"/></svg></i></div>
<div class="t r " style="left:309px;width:300px;top:517px;">Type of Service:</div>
<div class="in" style="left:616px;top:514px;width:27px;height:15px;"></div>
<div class="t r " style="left:309px;width:300px;top:536px;">Special Pkg Ind:</div>
<div class="cb" style="left:616px;top:533px;width:79px;height:16px">3 - Pharmacy L<i><svg width="9" height="7" viewBox="0 0 9 7"><path d="M1 1.5L4.5 5L8 1.5" fill="none" stroke="#4d6185" stroke-width="2"/></svg></i></div>
<div class="t r " style="left:309px;width:300px;top:556px;">Rx Origin:</div>
<div class="cb" style="left:616px;top:553px;width:79px;height:15px">1 - Written<i><svg width="9" height="7" viewBox="0 0 9 7"><path d="M1 1.5L4.5 5L8 1.5" fill="none" stroke="#4d6185" stroke-width="2"/></svg></i></div>
<div class="a" style="left:109px;top:578.5px;width:605px;height:1.5px;background:#8f8d84"></div>
<div class="a" style="left:31px;top:579.5px;width:683px;height:12.5px;background:#00ff00"></div>
<div class="t " style="left:33px;top:580px;">*Rx must be Discontinued &amp; Reassigned for Approved Refill Response</div>
<div class="a" style="left:31px;top:592px;width:683px;height:1.5px;background:#10309c"></div>
<div class="a" style="left:28px;top:593.5px;width:686px;height:1.5px;background:#8f93a8"></div>
<svg class="a" style="left:29.8px;top:578.4px" width="307.7" height="16.600000000000023" viewBox="-2 -2 307.7 16.600000000000023"><rect x="0" y="0" width="303.7" height="12.600000000000023" rx="6" fill="none" stroke="#f0080c" stroke-width="1.7"/></svg>
<div class="a" style="left:714px;top:0px;width:305px;height:595px;background:linear-gradient(90deg,#5a70e0 0,#5a70e0 1px,#7390e0 1px,#7390e0 2px,#92a6d0 2px);border-radius:7px 0 0 0"></div>
<div class="a" style="left:714px;top:0px;width:305px;height:22px;border-radius:7px 0 0 0;background:linear-gradient(#a5bed7 0.5px,#789beb 1.5px,#768edc 2.5px,#768edc 9.5px,#7396de 11.5px,#7398e0 14.5px,#7aa0eb 16.5px,#7aa0eb 19.5px,#6c88e4 20.5px,#6078dc 21.5px)"></div>
<div class="a" style="left:720px;top:5px;font-size:10.300px;line-height:15px;color:#e4ebfa;letter-spacing:.56px">JOHNSONTESTPATNT, JUANITA</div>
<div class="a" style="left:1002px;top:4px;width:16px;height:16px;border:1px solid #f2f2f6;border-radius:3px;background:linear-gradient(135deg,#a99aa0,#8f7f84)"><svg width="14" height="14" viewBox="0 0 14 14" style="position:absolute;left:0;top:0"><path d="M3.500 3.500L10.500 10.500M10.500 3.500L3.500 10.500" stroke="#fff" stroke-width="1.800"/></svg></div>
<div class="a" style="left:717px;top:22px;width:287px;height:573px;background:#c8c8c8;border-left:1px solid #70685a"></div>
<div class="a" style="left:717px;top:22px;width:302px;height:1.5px;background:#6a6250"></div>
<div class="a" style="left:718px;top:23.5px;width:286px;height:1.5px;background:linear-gradient(#d6d6d6,#c8c8c8)"></div>
<div class="a" style="left:1004px;top:22px;width:15px;height:573px;background:linear-gradient(90deg,#eceae2,#f8f7f3 40%,#fff)"></div>
<div class="a" style="left:1005px;top:24px;width:13px;height:13px;background:#dfe7fc;border:1px solid #eef2fd;border-radius:2px"><svg width="9" height="7" viewBox="0 0 9 7" style="position:absolute;left:1px;top:2px"><path d="M1 5.500L4.500 2L8 5.500" fill="none" stroke="#2d3f73" stroke-width="1.800"/></svg></div>
<div class="a" style="left:1005.500px;top:37px;width:12.500px;height:242px;background:linear-gradient(90deg,#c9d6fb,#bdcbf8);border:1px solid #aebdf0;border-radius:2px"><div style="position:absolute;left:3px;top:117px;width:5px;height:1px;background:#eef2fd;box-shadow:0 2px 0 #eef2fd,0 4px 0 #eef2fd,0 1px 0 #9fb1ea,0 3px 0 #9fb1ea,0 5px 0 #9fb1ea"></div></div>
<div class="t b" style="left:727px;top:36px;font-size:9.8px">Refill Response Information for Rx# 06356615</div>
<div class="t " style="left:726px;top:63px;">Date received: 08/02/2012</div>
<div class="t " style="left:726px;top:89px;"><span class="lk">Show Information</span> <span style="color:#2f5a3a">|</span> <span class="lk" style="color:#800080">Show Segments</span></div>
<div class="t " style="left:728px;top:117px;">Response Type:</div>
<div class="t " style="left:862px;top:117px;">Approved with Changes</div>
<div class="t " style="left:728px;top:130px;">Message:</div>
<div class="t " style="left:862px;top:130px;">Response to REFREQ reply with</div>
<div class="t " style="left:862px;top:140px;">99 refills approved</div>
<div class="t " style="left:728px;top:172px;">Patient Name:</div>
<div class="t " style="left:854px;top:172px;"><span style="letter-spacing:.34px">JOHNSONTESTPATNT, JUANITA</span></div>
<div class="t " style="left:728px;top:186px;">Date Of Birth:</div>
<div class="t " style="left:854px;top:186px;">01/15/1971</div>
<div class="t " style="left:728px;top:199px;">Telephone:</div>
<div class="t " style="left:854px;top:199px;">(864) 555-3333</div>
<div class="t " style="left:728px;top:229px;">Prescriber Name:</div>
<div class="t " style="left:859px;top:229px;">Test000XML, Prescriber10dot6</div>
<div class="t " style="left:728px;top:243px;">NPI:</div>
<div class="t " style="left:859px;top:243px;">1801897210</div>
<div class="t " style="left:728px;top:256px;">DEA:</div>
<div class="t " style="left:859px;top:256px;">AL4214932</div>
<div class="t " style="left:728px;top:270px;">Telephone:</div>
<div class="t " style="left:859px;top:270px;">(703) 855-6363</div>
<div class="t " style="left:728px;top:284px;">Fax Number:</div>
<div class="t " style="left:859px;top:284px;">(703) 999-5252</div>
<div class="t " style="left:728px;top:314px;">Drug Name:</div>
<div class="t " style="left:861px;top:314px;">THEO-DUR 100MG TABLET SA</div>
<div class="t " style="left:728px;top:328px;">NDC Number:</div>
<div class="t " style="left:861px;top:328px;">00085048701</div>
<div class="t " style="left:728px;top:341px;">Quantity:</div>
<div class="t " style="left:861px;top:341px;">10</div>
<div class="t " style="left:728px;top:354px;">Additional Fills Authorized:</div>
<div class="t " style="left:861px;top:354px;">99</div>
<div class="t " style="left:728px;top:368px;">DAW:</div>
<div class="t " style="left:861px;top:368px;">0 (No Product Selection Indicated)</div>
<div class="t " style="left:728px;top:382px;">Sig:</div>
<div class="t " style="left:861px;top:382px;">USE AS DIRECTED.</div>
<div class="t lk" style="left:726px;top:410px;">View Interactive Interchange Control Header (UIB) Segment</div>
<div class="t lk" style="left:726px;top:420px;">View Interactive Message Header (UIH) Segment</div>
<div class="t lk" style="left:726px;top:431px;">View Response Segment</div>
<div class="t lk" style="left:726px;top:441px;">View Prescriber Segment</div>
<div class="t lk" style="left:726px;top:452px;">View Pharmacy Segment</div>
<div class="t lk" style="left:726px;top:462px;">View Patient Segment</div>
<div class="t lk" style="left:726px;top:473px;">View Drug Segment</div>
<div class="t lk" style="left:726px;top:483px;">View Drug Segment</div>
<div class="t lk" style="left:726px;top:493px;">View Interactive Message Trailer (UIT) Segment</div>
<div class="t lk" style="left:726px;top:504px;">View Interactive Interchange Trailer (UIZ) Segment</div>
<div class="t b" style="left:728px;top:532px;font-size:8.8px">** INTERACTIVE INTERCHANGE CONTROL HEADER **</div>
<div class="t lk" style="left:728px;top:542px;">Return To Top</div>
<div class="t " style="left:728px;top:556px;">Segment Tag:</div>
<div class="t " style="left:832px;top:556px;">UIB</div>
<div class="t " style="left:728px;top:570px;">Segment identifier:</div>
<div class="t " style="left:832px;top:570px;">UNOA</div>
<div class="t " style="left:728px;top:584px;">Syntax version number:</div>
<div class="t " style="left:832px;top:584px;">0</div>
</body></html>
